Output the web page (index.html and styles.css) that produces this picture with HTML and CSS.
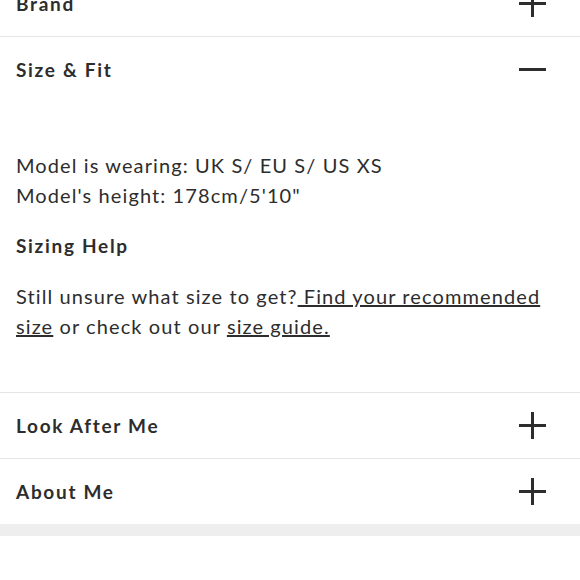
FILE: index.html
```html
<!DOCTYPE html>
<html>
<head>
    <title>Product Details</title>
    <link rel="stylesheet" href="styles.css">
</head>
<body>
    <div class="accordion">
        <div class="section">
            <div class="header">
                <h3 class="title">Brand</h3>
                <span class="icon plus"></span>
            </div>
        </div>

        <div class="section">
            <div class="header">
                <h3 class="title">Size &amp; Fit</h3>
                <span class="icon minus"></span>
            </div>
            <div class="content">
                <p class="text">Model is wearing: UK S/ EU S/ US XS<br>Model's height: 178cm/5'10"</p>
                <h4 class="subtitle">Sizing Help</h4>
                <p class="text">Still unsure what size to get?<a href="#"> Find your recommended size</a> or check out our <a href="#">size guide.</a></p>
            </div>
        </div>

        <div class="section">
            <div class="header">
                <h3 class="title">Look After Me</h3>
                <span class="icon plus"></span>
            </div>
        </div>

        <div class="section">
            <div class="header">
                <h3 class="title">About Me</h3>
                <span class="icon plus"></span>
            </div>
        </div>
    </div>

    <div class="band"></div>

    <div class="more">
        <h2 class="more-title">You Might Also Like</h2>
    </div>
</body>
</html>
```

FILE: styles.css
```css
body {
    margin: 0;
    background-color: white;
    color: #2d2d2d;
    font-family: "Lato", "Liberation Sans", sans-serif;
}
.accordion {
    margin-top: -29px;
}
.section {
    border-bottom: 1px solid #e6e6e6;
}
.section:last-child {
    border-bottom: none;
}
.header {
    display: flex;
    align-items: center;
    justify-content: space-between;
    height: 65px;
    padding: 0 34px 0 16px;
}
.title {
    margin: 0;
    font-size: 19px;
    font-weight: bold;
    letter-spacing: 1.7px;
}
.icon {
    position: relative;
    width: 27px;
    height: 27px;
}
.icon::before,
.icon::after {
    content: "";
    position: absolute;
    background-color: #2d2d2d;
}
.icon::before {
    left: 0;
    top: 12px;
    width: 27px;
    height: 3px;
}
.plus::after {
    left: 12px;
    top: 0;
    width: 3px;
    height: 27px;
}
.content {
    padding: 48px 16px 51px;
}
.text {
    margin: 0;
    font-size: 20px;
    line-height: 30px;
    letter-spacing: 1.1px;
}
.text a {
    color: #2d2d2d;
}
.subtitle {
    margin: 24px 0 24px;
    font-size: 19px;
    font-weight: bold;
    letter-spacing: 1.7px;
}
.band {
    height: 12px;
    background-color: #eeeeee;
}
.more {
    padding-top: 47px;
    text-align: center;
}
.more-title {
    margin: 0;
    font-size: 26px;
    letter-spacing: 2px;
}
```
